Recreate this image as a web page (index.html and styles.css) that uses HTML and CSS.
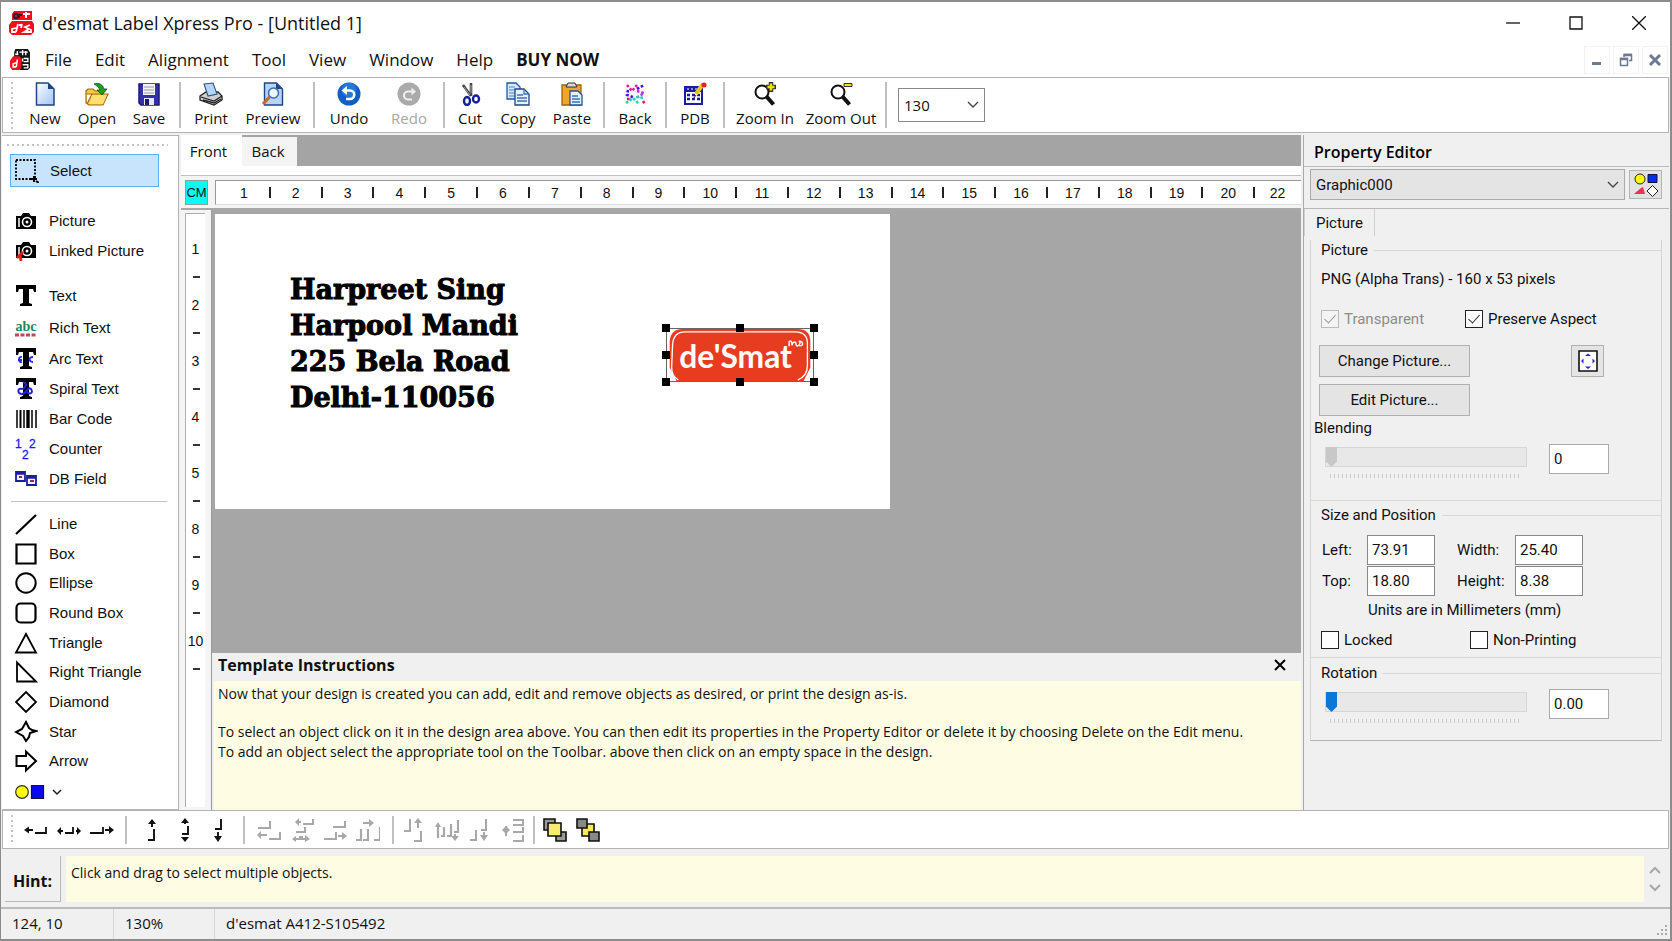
FILE: index.html
```html
<!DOCTYPE html>
<html lang="en">
<head>
<meta charset="utf-8">
<title>d'esmat Label Xpress Pro - [Untitled 1]</title>
<link rel="stylesheet" href="styles.css">
</head>
<body>
<div class="window">

<header class="titlebar">
  <svg class="app-icon" viewBox="0 0 26 26"><path d="M5 1h18v9H3V4z" fill="#e8141c"/><path d="M3 11h20l2 3v8l-3 3H3l-3-3v-7z" fill="#f01018"/><path d="M5 6c0-3 4-3 4 0s-4 3-4 0M10 8V5h3" stroke="#222" stroke-width="2" fill="none"/><path d="M17 2v6M14 4h7" stroke="#fff" stroke-width="2"/><path d="M9 14l-2 8M7 18l-4 1v3h4M12 15h-2M21 15l-5 2 4 2-5 3h7v-3M13 14l-1 4" stroke="#fff" stroke-width="1.800" fill="none"/></svg>
  <h1 class="title">d'esmat Label Xpress Pro - [Untitled 1]</h1>
  <div class="win-controls">
    <button class="win-btn" aria-label="Minimize"><svg viewBox="0 0 14 14"><path d="M0 7h14" stroke="#111" stroke-width="1.3"/></svg></button>
    <button class="win-btn" aria-label="Maximize"><svg viewBox="0 0 14 14"><path d="M1 1h12v12H1z" stroke="#111" stroke-width="1.3" fill="none"/></svg></button>
    <button class="win-btn" aria-label="Close"><svg viewBox="0 0 14 14"><path d="M0 0l14 14M14 0L0 14" stroke="#111" stroke-width="1.3"/></svg></button>
  </div>
</header>

<nav class="menubar">
  <svg class="doc-icon" viewBox="0 0 20 20"><path d="M5 0h12l2 3v15l-2 2H9V8H4V3z" fill="#151515"/><path d="M3 7h6l2 2v9l-2 2H2l-2-3v-6z" fill="#e8141c"/><path d="M7 2v4M12 1v5M9 3h8M15 2v4M5 5h3M13 9h4v3h-4M12 15h5v3h-4M12 9v3" stroke="#fff" stroke-width="1.300" fill="none"/><path d="M7 10l-1 7M6 13l-3 1v3h3" stroke="#fff" stroke-width="1.500" fill="none"/></svg>
  <button class="menu">File</button>
  <button class="menu">Edit</button>
  <button class="menu">Alignment</button>
  <button class="menu">Tool</button>
  <button class="menu">View</button>
  <button class="menu">Window</button>
  <button class="menu">Help</button>
  <button class="menu menu-buy">BUY NOW</button>
  <div class="mdi-controls">
    <button class="mdi-btn" aria-label="Minimize document"><svg viewBox="0 0 14 14"><path d="M2 10.500h9" stroke="#6c7a91" stroke-width="3"/></svg></button>
    <button class="mdi-btn" aria-label="Restore document"><svg viewBox="0 0 14 14"><path d="M5 4V1.500h7.500v6H10M1.500 5.500h7v7h-7z" fill="none" stroke="#6c7a91" stroke-width="1.500"/><path d="M5 2h8M1 6h8" stroke="#6c7a91" stroke-width="2.500"/></svg></button>
    <button class="mdi-btn" aria-label="Close document"><svg viewBox="0 0 14 14"><path d="M2 2l10 10M12 2L2 12" stroke="#6c7a91" stroke-width="3"/></svg></button>
  </div>
</nav>

<div class="toolbar">
  <span class="grip"></span>
  <div class="tool-group">
    <button class="tool w-s"><svg viewBox="0 0 24 24"><defs><linearGradient id="paper" x2="1" y2="1"><stop offset="0" stop-color="#fff"/><stop offset="1" stop-color="#9cc4f4"/></linearGradient></defs><path d="M3.500 1h11.500l6 6v16H3.500z" fill="url(#paper)" stroke="#20457f" stroke-width="1.500"/><path d="M15 1v6h6z" fill="#20457f"/></svg>New</button>
    <button class="tool w-s"><svg viewBox="0 0 24 24"><path d="M1 9l2-2h5l2 2h8v3H1z M1 9v12l3 2h14l5-11H7L2 22" fill="#f8c840" stroke="#a06c10" stroke-width="1.200"/><path d="M7 13h15l-4 9H4z" fill="#ffe070"/><path d="M9 2c5-2 9 1 10 5h3l-5 6-5-5h3c-1-3-3-4-6-6z" fill="#1f9c22" stroke="#0b5a10" stroke-width=".8"/></svg>Open</button>
    <button class="tool w-s"><svg viewBox="0 0 24 24"><path d="M2 2h20v21H4l-2-2z" fill="#3430a8" stroke="#1c187c" stroke-width="1.500"/><path d="M6 2h12v11H6z" fill="#f4f4f4"/><path d="M7 5h10M7 8h10M7 11h10" stroke="#999"/><path d="M7 16h10v7H7z" fill="#e8e8f0"/><path d="M8 17h4v6H8z" fill="#1c187c"/></svg>Save</button>
  </div>
  <div class="tool-group">
    <button class="tool w-s"><svg viewBox="0 0 24 24"><path d="M1 14l6-4h12l4 4v4l-8 5-14-5z" fill="#d0d0d0" stroke="#222" stroke-width="1.300"/><path d="M2 15l13 4 8-5M4 18l11 3 7-4" stroke="#222" stroke-width="1.300" fill="none"/><path d="M5 2l9-1 4 11-9 2z" fill="#b4d4fa" stroke="#31507c" stroke-width="1.100"/></svg>Print</button>
    <button class="tool w-l"><svg viewBox="0 0 24 24"><path d="M3.500 1h12l6 6v16h-18z" fill="#b4d4fa" stroke="#20457f" stroke-width="1.400"/><path d="M15 1v6h6z" fill="#20457f"/><circle cx="12.500" cy="11" r="5" fill="#eef6ff" stroke="#3d6bb0" stroke-width="1.500"/><path d="M8.500 15L2 22" stroke="#c4682c" stroke-width="3"/></svg>Preview</button>
  </div>
  <div class="tool-group">
    <button class="tool w-m"><svg viewBox="0 0 24 24"><circle cx="12" cy="12" r="11.500" fill="#125ec4"/><circle cx="12" cy="8" r="7.500" fill="#3d8ae4" opacity=".55"/><path d="M7.500 8.500H13a4 4 0 010 8.500H9" stroke="#fff" stroke-width="2.600" fill="none"/><path d="M4.500 8.500L10 4v9z" fill="#fff"/></svg>Undo</button>
    <button class="tool w-m" disabled><svg viewBox="0 0 24 24"><circle cx="12" cy="12" r="11.500" fill="#aaa"/><path d="M16 9.500h-5a4 4 0 000 8h4" stroke="#eee" stroke-width="2.200" fill="none"/><path d="M19 9.500L14.500 5.500v8z" fill="#eee"/></svg>Redo</button>
  </div>
  <div class="tool-group">
    <button class="tool w-xs"><svg viewBox="0 0 24 24"><path d="M5 3l8 11M13 1v13" stroke="#444" stroke-width="2.600"/><path d="M6 5l6 8M13 3v8" stroke="#bbb" stroke-width=".8"/><ellipse cx="9" cy="19" rx="3" ry="4" fill="none" stroke="#16209c" stroke-width="2.400"/><ellipse cx="18" cy="17" rx="3" ry="3.500" fill="none" stroke="#16209c" stroke-width="2.400"/></svg>Cut</button>
    <button class="tool w-p"><svg viewBox="0 0 24 24"><path d="M1 1h9l4 4v12H1z" fill="#d8e8fc" stroke="#20559c" stroke-width="1.300"/><path d="M3 5h6M3 8h8M3 11h8M3 14h6" stroke="#4a80c4"/><path d="M9 7h9l5 5v11H9z" fill="#e8f2ff" stroke="#20457f" stroke-width="1.300"/><path d="M18 7v5h5M11 13h6M11 16h10M11 19h10" stroke="#3a72bc" fill="none" stroke-width="1.300"/></svg>Copy</button>
    <button class="tool w-p"><svg viewBox="0 0 24 24"><path d="M2 3h19v20H2z" fill="#f0a428" stroke="#9c6410" stroke-width="1.300"/><path d="M6 5l2-4h7l2 4z" fill="#d8d8d8" stroke="#333"/><path d="M10 9h8l4 4v10H10z" fill="#e4f0ff" stroke="#20559c" stroke-width="1.300"/><path d="M12 14h6M12 17h8M12 20h8" stroke="#3a72bc" stroke-width="1.300"/></svg>Paste</button>
  </div>
  <div class="tool-group">
    <button class="tool w-s"><svg viewBox="0 0 24 24"><g fill="none" stroke-width="2.600" stroke-dasharray="2.600 1.800"><path d="M4 3l5 6 5-6" stroke="#e81890"/><path d="M14 7l7-4M5 8l-1 5 6 2" stroke="#4410e0"/><path d="M14 9l7 2-6 4" stroke="#c030e8"/><path d="M3 21l7-5 6 6M13 15l8 1" stroke="#20d0b8"/><path d="M20 19l2 3M4 17h3" stroke="#e81860"/></g></svg>Back</button>
  </div>
  <div class="tool-group">
    <button class="tool w-xs w-db"><svg viewBox="0 0 24 24"><path d="M2 5h17v17H2z" fill="#fff" stroke="#1c1ca0" stroke-width="2"/><path d="M2 5h17v5H2z" fill="#1c1ca0"/><path d="M4 7h2M8 7h2M12 7h2" stroke="#fff"/><path d="M4 13h13M4 17h13" stroke="#1c1ca0" stroke-width="2.400" stroke-dasharray="3 2"/><path d="M13 12l7-10" stroke="#e8c810" stroke-width="4"/><circle cx="21" cy="3" r="2.500" fill="#e82020"/><path d="M13 13l-2 3" stroke="#222"/></svg>PDB</button>
  </div>
  <div class="tool-group">
    <button class="tool w-zin"><svg viewBox="0 0 24 24"><circle cx="9" cy="10" r="6.500" fill="#fff" stroke="#111" stroke-width="2"/><path d="M13.500 14.500l7 8" stroke="#111" stroke-width="4"/><path d="M18 0v10M13 5h10" stroke="#333" stroke-width="4.500"/><path d="M18 1.500v7M14.500 5h7" stroke="#f4e010" stroke-width="2.400"/></svg>Zoom In</button>
    <button class="tool w-zout"><svg viewBox="0 0 24 24"><circle cx="9" cy="10" r="6.500" fill="#fff" stroke="#111" stroke-width="2"/><path d="M13.500 14.500l7 8" stroke="#111" stroke-width="4"/><path d="M15 1.500h8v3h-8z" fill="#f4e010" stroke="#333"/></svg>Zoom Out</button>
  </div>
  <div class="combo combo-zoom">
    <select aria-label="Zoom level"><option>130</option></select>
    <svg viewBox="0 0 12 8"><path d="M1 1l5 5 5-5" fill="none" stroke="#444" stroke-width="1.400"/></svg>
  </div>
</div>

<main class="work">
  <aside class="palette">
    <span class="grip-h"></span>
    <button class="pal pal-select"><svg viewBox="0 0 24 24"><path d="M1 1h19v19H1z" fill="none" stroke="#000" stroke-width="1.800" stroke-dasharray="2 1.500"/><path d="M16 20h6M19 17v6M21 22l3 2" stroke="#000" stroke-width="2"/></svg>Select</button>
    <div class="pal-list">
      <button class="pal"><svg viewBox="0 0 24 24"><path d="M2 7h5l2-3h6l2 3h5v13H2z" fill="#000"/><circle cx="13" cy="13" r="4.500" fill="none" stroke="#fff" stroke-width="1.600"/><circle cx="13" cy="13" r="1.500" fill="#fff"/><path d="M5 9v9" stroke="#fff" stroke-width="1.500"/></svg>Picture</button>
      <button class="pal"><svg viewBox="0 0 24 24"><path d="M2 6h5l2-3h6l2 3h5v13H2z" fill="#000"/><circle cx="13" cy="12" r="4.500" fill="none" stroke="#fff" stroke-width="1.600"/><circle cx="13" cy="12" r="1.500" fill="#fff"/><path d="M5 8v9" stroke="#fff" stroke-width="1.500"/><path d="M9 13l-6 6M6 15l1 7" stroke="#f01818" stroke-width="2.800"/></svg>Linked Picture</button>
    </div>
    <div class="pal-list pal-text">
      <button class="pal pal-tall"><svg viewBox="0 0 24 24"><path d="M2 1h20v7h-2l-1-3h-4v14l3 1v2H6v-2l3-1V5H5L4 8H2z" fill="#000"/></svg>Text</button>
      <button class="pal pal-tall"><svg viewBox="0 0 24 24"><text x="12" y="15" text-anchor="middle" class="icon-abc">abc</text><path d="M1 19h22" stroke="#b84c50" stroke-width="3" stroke-dasharray="4 1.500"/></svg>Rich Text</button>
      <button class="pal"><svg viewBox="0 0 24 24"><path d="M2 1h20v7h-2l-1-3h-4v14l3 1v2H6v-2l3-1V5H5L4 8H2z" fill="#000"/><path d="M8 10c-4-1-4 6 0 5M4 13h4M19 10c-5 0-4 5 0 5" fill="none" stroke="#2828e0" stroke-width="1.800"/></svg>Arc Text</button>
      <button class="pal"><svg viewBox="0 0 24 24"><path d="M2 1h20v7h-2l-1-3h-4v14l3 1v2H6v-2l3-1V5H5L4 8H2z" fill="#000"/><path d="M9 5c6 2 1 6 0 7M9 12c-6-2-6 5-1 5 5 0 5-8 9-5 3 4-2 6-4 3" fill="none" stroke="#2020e0" stroke-width="2"/></svg>Spiral Text</button>
      <button class="pal"><svg viewBox="0 0 24 24"><path d="M3 3v18M10 3v18M18 3v18M22 3v18" stroke="#000" stroke-width="1.500"/><path d="M6.500 3v18" stroke="#000" stroke-width="2"/><path d="M14 3v18" stroke="#000" stroke-width="3.400"/></svg>Bar Code</button>
      <button class="pal"><svg viewBox="0 0 24 24" class="icon-num"><text x="1" y="11">1</text><text x="8" y="22">2</text><text x="15" y="11">2</text></svg>Counter</button>
      <button class="pal"><svg viewBox="0 0 24 24"><path d="M2 5h9v9H2zM13 9h9v9h-9z" fill="#f4f0ff" stroke="#1c1ca0" stroke-width="1.800"/><path d="M2 6.500h9M13 10.500h9" stroke="#1c1ca0" stroke-width="2.500"/><path d="M5 10h3M16 14h4" stroke="#803050" stroke-width="2"/></svg>DB Field</button>
    </div>
    <hr class="pal-rule">
    <div class="pal-list pal-shapes">
      <button class="pal"><svg viewBox="0 0 24 24"><path d="M2 22L22 3" stroke="#000" stroke-width="2.200"/></svg>Line</button>
      <button class="pal"><svg viewBox="0 0 24 24"><path d="M2.500 2.500h19v19h-19z" fill="none" stroke="#000" stroke-width="2.200"/></svg>Box</button>
      <button class="pal"><svg viewBox="0 0 24 24"><circle cx="12" cy="12" r="9.700" fill="none" stroke="#000" stroke-width="2"/></svg>Ellipse</button>
      <button class="pal"><svg viewBox="0 0 24 24"><rect x="2.500" y="2.500" width="19" height="19" rx="4" fill="none" stroke="#000" stroke-width="2.200"/></svg>Round Box</button>
      <button class="pal"><svg viewBox="0 0 24 24"><path d="M12 3l10 18.500H2z" fill="none" stroke="#000" stroke-width="1.800"/></svg>Triangle</button>
      <button class="pal"><svg viewBox="0 0 24 24"><path d="M3 2.500L22 21.500H3z" fill="none" stroke="#000" stroke-width="1.800"/></svg>Right Triangle</button>
      <button class="pal"><svg viewBox="0 0 24 24"><path d="M12 2l10 10-10 10L2 12z" fill="none" stroke="#000" stroke-width="1.800"/></svg>Diamond</button>
      <button class="pal"><svg viewBox="0 0 24 24"><path d="M12 2l3 6 3 2 4 1-6 2-1 4-3 4-3-5-7-4 6-3z" fill="none" stroke="#000" stroke-width="2"/></svg>Star</button>
      <button class="pal"><svg viewBox="0 0 24 24"><path d="M2.500 7H12V2.500L22 12l-10 9.500V17H2.500z" fill="none" stroke="#000" stroke-width="2"/></svg>Arrow</button>
    </div>
    <button class="pal-more" aria-label="More shapes"><svg viewBox="0 0 48 16"><circle cx="7" cy="8" r="6.300" fill="#ff0" stroke="#333" stroke-width="1.200"/><path d="M16.500 1.500h12v13h-12z" fill="#0a0af0" stroke="#113" stroke-width="1.200"/><path d="M38 6l4 4 4-4" fill="none" stroke="#222" stroke-width="1.500"/></svg></button>
  </aside>

  <section class="editor">
    <div class="tabs"><button class="tab tab-on">Front</button><button class="tab">Back</button></div>
    <div class="tab-base"></div>
    <div class="ruler-top">
      <button class="unit">CM</button>
      <ol class="hruler"><li>1</li><li>2</li><li>3</li><li>4</li><li>5</li><li>6</li><li>7</li><li>8</li><li>9</li><li>10</li><li>11</li><li>12</li><li>13</li><li>14</li><li>15</li><li>16</li><li>17</li><li>18</li><li>19</li><li>20</li><li>22</li></ol>
    </div>
    <div class="editor-body">
      <div class="vrail"><ol class="vruler"><li>1</li><li>2</li><li>3</li><li>4</li><li>5</li><li>8</li><li>9</li><li>10</li></ol></div>
      <div class="design">
        <div class="canvas">
          <div class="label-page">
            <p class="address">Harpreet Sing<br>Harpool Mandi<br>225 Bela Road<br>Delhi-110056</p>
            <div class="graphic">
              <svg viewBox="0 0 148 54"><path d="M14 0H134Q147 0 147 13V40L140 54H8L1 40V13Q2 0 14 0z" fill="#e83c20"/><path d="M10 53Q3 49 3 40L4 16Q5 3 17 3H131Q144 3 144 15V38Q144 49 134 53" fill="none" stroke="#fff" stroke-width="1.400"/><text x="11" y="41" class="logo-word">de'Smat</text><path d="M125 18v-5q3-2 3 4 1-5 4-3M132 14q0 5 3 3 3-4 0-4 4-1 4 3-1 2-4 1" fill="none" stroke="#fff" stroke-width="1.500"/></svg>
              <i class="h nw"></i><i class="h n"></i><i class="h ne"></i><i class="h w"></i><i class="h e"></i><i class="h sw"></i><i class="h s"></i><i class="h se"></i>
            </div>
          </div>
        </div>
        <div class="notes-head"><h2>Template Instructions</h2><button aria-label="Close instructions"><svg viewBox="0 0 12 12"><path d="M1 1l10 10M11 1L1 11" stroke="#000" stroke-width="2"/></svg></button></div>
        <div class="notes">
          <p>Now that your design is created you can add, edit and remove objects as desired, or print the design as-is.</p>
          <p>To select an object click on it in the design area above. You can then edit its properties in the Property Editor or delete it by choosing Delete on the Edit menu.<br>To add an object select the appropriate tool on the Toolbar. above then click on an empty space in the design.</p>
        </div>
      </div>
    </div>
  </section>

  <aside class="props">
    <h2 class="props-title">Property Editor</h2>
    <div class="props-pick">
      <div class="combo combo-object">
        <select aria-label="Object"><option>Graphic000</option></select>
        <svg viewBox="0 0 12 8"><path d="M1 1l5 5 5-5" fill="none" stroke="#444" stroke-width="1.400"/></svg>
      </div>
      <button class="pick-btn" aria-label="Shapes"><svg viewBox="0 0 24 24"><circle cx="6" cy="6" r="5" fill="#ff0" stroke="#222"/><path d="M14 1.500h9v8h-9z" fill="#0a2af0" stroke="#113"/><path d="M0 21l7-6 2-1 2 7z" fill="#f03050"/><path d="M18.500 12.500L24 18l-5.500 5.500L13 18z" fill="#fff" stroke="#222"/></svg></button>
    </div>
    <div class="props-tabs"><button class="props-tab">Picture</button></div>
    <div class="props-body">
      <section class="group group-picture">
        <h3 class="legend"><span>Picture</span></h3>
        <p class="info">PNG (Alpha Trans) - 160 x 53 pixels</p>
        <div class="checks"><label class="check off"><input type="checkbox" checked disabled>Transparent</label><label class="check"><input type="checkbox" checked>Preserve Aspect</label></div>
        <div class="pic-actions">
          <div class="pic-buttons"><button class="btn">Change Picture...</button><button class="btn">Edit Picture...</button></div>
          <button class="fit-btn" aria-label="Fit to page"><svg viewBox="0 0 20 22"><path d="M1 1h18v20H1z" fill="#fff" stroke="#111" stroke-width="1.600"/><path d="M10 3.500l3 2.500H7zM10 19l-3-2.500h6zM3 11l2.500-2.500v5zM17 11l-2.500-2.500v5z" fill="#2020e8"/></svg></button>
        </div>
        <label class="blend-label" for="blend">Blending</label>
        <div class="slide-row"><div class="slide"><input id="blend" type="range" value="0" disabled><span class="ticks"></span></div><input class="num" type="text" value="0" aria-label="Blending value"></div>
      </section>
      <section class="group group-size">
        <h3 class="legend"><span>Size and Position</span></h3>
        <div class="fields">
          <label for="left">Left:</label><input id="left" class="num" type="text" value="73.91">
          <label for="width">Width:</label><input id="width" class="num" type="text" value="25.40">
          <label for="top">Top:</label><input id="top" class="num" type="text" value="18.80">
          <label for="height">Height:</label><input id="height" class="num" type="text" value="8.38">
        </div>
        <p class="units">Units are in Millimeters (mm)</p>
        <div class="checks"><label class="check"><input type="checkbox">Locked</label><label class="check"><input type="checkbox">Non-Printing</label></div>
      </section>
      <section class="group group-rotate">
        <h3 class="legend"><span>Rotation</span></h3>
        <div class="slide-row"><div class="slide"><input type="range" value="0" aria-label="Rotation"><span class="ticks"></span></div><input class="num" type="text" value="0.00" aria-label="Rotation value"></div>
      </section>
    </div>
  </aside>
</main>

<div class="alignbar">
  <span class="grip"></span>
  <div class="align-group align-h">
    <button aria-label="Nudge left"><svg viewBox="0 0 24 24"><path d="M3 12h6M11 15h11V9" stroke="currentColor" stroke-width="1.800" fill="none"/><path d="M0 12l5-3.500v7z" fill="currentColor"/></svg></button>
    <button aria-label="Center across"><svg viewBox="0 0 24 24"><path d="M2 13h4M19 13h3M8 15h8V9" stroke="currentColor" stroke-width="1.800" fill="none"/><path d="M0 13l4-4v8zM24 13l-4-4v8z" fill="currentColor"/></svg></button>
    <button aria-label="Nudge right"><svg viewBox="0 0 24 24"><path d="M0 15h13V9M15 12h6" stroke="currentColor" stroke-width="1.800" fill="none"/><path d="M24 12l-5-4v8z" fill="currentColor"/></svg></button>
  </div>
  <div class="align-group align-v">
    <button aria-label="Nudge up"><svg viewBox="0 0 24 24"><path d="M12 3v6M14 11v11H8" stroke="currentColor" stroke-width="1.900" fill="none"/><path d="M12 1l4 5H8z" fill="currentColor"/></svg></button>
    <button aria-label="Center down"><svg viewBox="0 0 24 24"><path d="M12 3v3M12 20v2M15 8v8H9" stroke="currentColor" stroke-width="1.900" fill="none"/><path d="M12 0l4 5H8zM12 24l-4-5h8z" fill="currentColor"/></svg></button>
    <button aria-label="Nudge down"><svg viewBox="0 0 24 24"><path d="M15 1v10H9M12 14v8" stroke="currentColor" stroke-width="1.900" fill="none"/><path d="M12 24l-4-6h8z" fill="currentColor"/></svg></button>
  </div>
  <div class="align-group align-edges">
    <button disabled aria-label="Align left"><svg viewBox="0 0 24 24"><path d="M1 10h12V3M3 17h7M12 21h11v-7" stroke="currentColor" stroke-width="2" fill="none"/><path d="M0 17l4-4v8z" fill="currentColor"/></svg></button>
    <button disabled aria-label="Align centers"><svg viewBox="0 0 24 24"><path d="M7 4h4M13 6h10V1M6 14h9V9M4 21h13" stroke="currentColor" stroke-width="2" fill="none"/><path d="M5 4l4-4v8zM2 21l4-3v6zM20 21l-5-4v7zM9 18h4v4H9z" fill="currentColor"/></svg></button>
    <button disabled aria-label="Align right"><svg viewBox="0 0 24 24"><path d="M10 9h12V3M1 21h12v-7M15 18h6" stroke="currentColor" stroke-width="2" fill="none"/><path d="M24 18l-5-4v8z" fill="currentColor"/></svg></button>
    <button disabled aria-label="Space across"><svg viewBox="0 0 24 24"><path d="M7 5h9M0 22h5V11M7 22h5V11M18 22h6V9" stroke="currentColor" stroke-width="2.200" fill="none"/><path d="M18 5l-5-4v8z" fill="currentColor"/></svg></button>
  </div>
  <div class="align-group">
    <button disabled aria-label="Align top"><svg viewBox="0 0 24 24"><path d="M8 1v12H2M16 3v7M19 13v10h-7" stroke="currentColor" stroke-width="2" fill="none"/><path d="M16 0l4 5h-8z" fill="currentColor"/></svg></button>
    <button disabled aria-label="Align middles"><svg viewBox="0 0 24 24"><path d="M3 8v12M9 9v9H6M16 6v12h-4M23 2v12h-4M20 16v5" stroke="currentColor" stroke-width="2.200" fill="none"/><path d="M3 4l3 5H0zM20 23l-4-5h8z" fill="currentColor"/></svg></button>
    <button disabled aria-label="Align bottom"><svg viewBox="0 0 24 24"><path d="M18 1v11h-5M16 14v8M8 12v10H2" stroke="currentColor" stroke-width="2" fill="none"/><path d="M16 23l-4-6h8z" fill="currentColor"/></svg></button>
    <button disabled aria-label="Space down"><svg viewBox="0 0 24 24"><path d="M12 2h10v5H12M12 14h10V9M12 23h10v-6M5 8v10" stroke="currentColor" stroke-width="2" fill="none"/><path d="M1 12l4-4 4 4-4 4z" fill="currentColor"/></svg></button>
  </div>
  <div class="align-group">
    <button aria-label="Bring to front"><svg viewBox="0 0 24 24"><path d="M1 1h11v11H1zM13 14h10v9H13z" fill="#999" stroke="#111" stroke-width="1.600"/><path d="M5 5h13v13H5z" fill="#f8ec70" stroke="#111" stroke-width="1.600"/></svg></button>
    <button aria-label="Send to back"><svg viewBox="0 0 24 24"><path d="M6 6h12v12H6z" fill="#f8ec50" stroke="#111" stroke-width="1.600"/><path d="M1 1h10v9H1zM13 14h10v9H13z" fill="#888" stroke="#111" stroke-width="1.600"/></svg></button>
  </div>
</div>

<div class="hintbar">
  <strong class="hint-label">Hint:</strong>
  <p class="hint-text">Click and drag to select multiple objects.</p>
  <div class="hint-scroll">
    <button aria-label="Scroll up"><svg viewBox="0 0 12 8"><path d="M1 7l5-5 5 5" fill="none" stroke="#a8a8a8" stroke-width="2"/></svg></button>
    <button aria-label="Scroll down"><svg viewBox="0 0 12 8"><path d="M1 1l5 5 5-5" fill="none" stroke="#a8a8a8" stroke-width="2"/></svg></button>
  </div>
</div>

<footer class="statusbar">
  <span class="st st-pos">124, 10</span><span class="st st-zoom">130%</span><span class="st st-doc">d'esmat A412-S105492</span>
  <svg viewBox="0 0 12 12"><path d="M9 1h2M9 5h2M5 5h2M9 9h2M5 9h2M1 9h2" stroke="#aaa" stroke-width="2"/></svg>
</footer>
</div>
</body>
</html>
```
FILE: styles.css
```css
* { box-sizing: border-box; }
body {
  margin: 0;
  color: #111;
  font: 16px/20px "Open Sans", "Noto Sans", sans-serif;
}
h1, h2, h3, p, ol { margin: 0; padding: 0; font-weight: 400; }
ol { list-style: none; }
button, input, select { margin: 0; font: inherit; color: inherit; border-radius: 0; }
button { padding: 0; border: 0; background: none; }
svg { display: block; flex: none; }

.window {
  min-height: 100vh;
  display: flex;
  flex-direction: column;
  background: #f0f0f0;
  border: 2px solid #8c8c8c;
  border-width: 2px 2px 2px 1px;
}

/* title and menu */
.titlebar { display: flex; align-items: center; height: 42px; background: #fff; padding-left: 8px; }
.app-icon { width: 26px; height: 26px; }
.title { flex: 1; margin-left: 7px; font-size: 18px; line-height: 24px; }
.win-controls { display: flex; }
.win-btn { width: 63px; height: 42px; display: grid; place-items: center; }
.win-btn svg { width: 14px; height: 14px; }
.menubar { display: flex; align-items: center; gap: 1px; height: 33px; background: #fff; padding: 0 0 2px 9px; }
.doc-icon { width: 21px; height: 21px; margin-right: 2px; }
.menu { padding: 0 11px; height: 28px; font-size: 17px; }
.menu-buy { font-weight: 700; }
.mdi-controls { display: flex; gap: 3px; margin-left: auto; padding-right: 2px; }
.mdi-btn { width: 26px; height: 28px; border: 1px solid #f2f2f2; display: grid; place-items: center; }
.mdi-btn svg { width: 14px; height: 14px; }

/* main toolbar */
.toolbar {
  display: flex;
  align-items: center;
  height: 56px;
  margin: 0 1px;
  background: #fff;
  border: 1px solid #b4b4b4;
}
.grip { width: 2px; margin: 4px 2px 3px 8px; align-self: stretch; background: repeating-linear-gradient(#c4c4c4 0 2px, transparent 2px 5px); }
.tool-group { display: flex; padding: 0 4px; border-right: 2px solid #c0c0c0; height: 46px; }
.tool { display: flex; flex-direction: column; align-items: center; justify-content: space-between; font-size: 15px; line-height: 20px; white-space: nowrap; }
.tool svg { width: 24px; height: 24px; }
.tool:disabled { color: #a8a8a8; }
.w-xs { width: 42px; }
.w-db { width: 48px; }
.w-s { width: 52px; }
.w-p { width: 54px; }
.w-m { width: 60px; }
.w-l { width: 72px; }
.w-zin { width: 72px; }
.w-zout { width: 80px; }
.combo { position: relative; display: flex; }
.combo select { appearance: none; width: 100%; border: 1px solid #888; background: #fff; padding: 0 5px; }
.combo svg { position: absolute; right: 6px; top: 50%; width: 12px; height: 8px; margin-top: -4px; pointer-events: none; }
.combo-zoom { width: 87px; height: 34px; margin-left: 11px; font-size: 15px; }

/* work area */
.work { flex: 1; display: flex; padding: 2px 1px 0; min-height: 0; }
.palette {
  width: 177px;
  display: flex;
  flex-direction: column;
  padding: 8px 0 0 5px;
  background: #fff;
  border: 1px solid #b4b4b4;
  border-left: 0;
  font-family: "Liberation Sans", Arial, sans-serif;
  font-size: 15px;
}
.grip-h { height: 2px; margin-right: 10px; background: repeating-linear-gradient(90deg, #c4c4c4 0 2px, transparent 2px 5px); }
.pal { display: flex; align-items: center; gap: 11px; height: 30px; padding-left: 6px; width: 100%; text-align: left; white-space: nowrap; }
.pal svg { width: 24px; height: 24px; }
.pal-select { width: 149px; height: 33px; margin: 8px 0 19px 3px; padding-left: 4px; background: #c8e4fc; border: 1px solid #5eaef0; }
.pal-list { padding-left: 1px; }
.pal-text { margin-top: 14px; }
.pal-tall { height: 32px; }
.pal-rule { width: 156px; margin: 7px 0 7px 4px; border: 0; border-top: 1px solid #c4c4c4; }
.pal-shapes { flex: 1; display: flex; flex-direction: column; }
.pal-shapes .pal { flex: 1; height: auto; }
.pal-more { margin: 8px 0 9px 8px; width: 48px; }
.pal-more svg { width: 48px; height: 16px; }
.icon-abc { font: 700 14px "Liberation Serif", serif; fill: #1c8464; }
.icon-num { font: 12px "Liberation Sans", sans-serif; fill: #2020e0; stroke: #2020e0; stroke-width: 0.3; }

/* editor */
.editor { flex: 1; min-width: 0; display: flex; flex-direction: column; margin-left: 2px; }
.tabs { display: flex; height: 31px; background: #a4a4a4; }
.tab { width: 55px; font-size: 15px; background: #f4f4f4; margin-top: 2px; padding: 0 3px 2px 0; }
.tab-on { width: 61px; background: #fff; margin-top: 0; padding: 0 6px 0 0; }
.tab-base { height: 10px; background: #fff; border-bottom: 1px solid #c0c0c0; }
.ruler-top { display: flex; height: 34px; padding: 4px 0 3px 4px; background: #f4f4f4; border-bottom: 2px solid #a8a8a8; }
.unit { width: 23px; background: #0ff; border: 1px solid #999; margin-right: 7px; font: 13px/16px "Liberation Sans", sans-serif; }
.hruler { flex: 1; display: flex; align-items: center; padding-left: 2px; background: #fff; border: 1px solid #999; border-right: 0; border-bottom-color: #ddd; font: 14px/16px "Liberation Sans", sans-serif; }
.hruler li { flex: 1 1 0; text-align: center; position: relative; }
.hruler li:last-child { flex-grow: 0.9; }
.hruler li:not(:last-child)::after { content: ""; position: absolute; right: -1px; top: 2px; width: 2px; height: 11px; background: #222; }
.editor-body { flex: 1; display: flex; }
.vrail { width: 30px; padding: 3px 6px 3px 4px; background: #f4f4f4; }
.vruler { height: 100%; padding-top: 7px; background: #fff; border: 1px solid #b0b0b0; border-width: 1px 0 0 1px; font: 14px/16px "Liberation Sans", sans-serif; }
.vruler li { height: 56px; display: grid; place-items: center; position: relative; }
.vruler li::after { content: ""; position: absolute; left: 7px; bottom: -1px; width: 7px; height: 2px; background: #333; }
.design { flex: 1; min-width: 0; display: flex; flex-direction: column; border-left: 1px solid #999; }
.canvas { flex: 1; background: #a6a6a6; padding: 4px 3px; }
.label-page { position: relative; width: 675px; height: 295px; background: #fff; }
.address { position: absolute; left: 75px; top: 58px; font: 700 27px/36px "DejaVu Serif", serif; color: #000; -webkit-text-stroke: 1px #000; white-space: nowrap; }
.graphic { position: absolute; left: 451px; top: 114px; width: 148px; height: 54px; border: 1px solid #666; }
.graphic svg { width: 100%; height: 100%; }
.logo-word { font: 700 33px Lato, sans-serif; fill: #fff; }
.h { position: absolute; width: 8px; height: 8px; background: #000; }
.nw, .n, .ne { top: -5px; }
.w, .e { top: 22px; }
.sw, .s, .se { bottom: -5px; }
.nw, .w, .sw { left: -5px; }
.n, .s { left: 69px; }
.ne, .e, .se { right: -5px; }
.notes-head { display: flex; align-items: center; justify-content: space-between; height: 28px; padding: 0 15px 4px 6px; background: #f0f0f0; }
.notes-head h2 { font-size: 16px; font-weight: 700; }
.notes-head svg { width: 12px; height: 12px; }
.notes { height: 129px; margin-left: 2px; padding: 3px 4px; background: #fefde4; font-size: 14px; line-height: 20px; }
.notes p + p { margin-top: 18px; }

/* property editor */
.props { width: 366px; display: flex; flex-direction: column; margin-left: 2px; border-left: 1px solid #aaa; font-family: Roboto, sans-serif; font-size: 15px; }
.props-title { height: 32px; padding: 7px 10px; font: 600 16px/20px "Open Sans", sans-serif; border-bottom: 1px solid #bbb; color: #000; }
.props-pick { display: flex; gap: 4px; padding: 2px 7px 8px 6px; border-bottom: 1px solid #b8b8b8; }
.combo-object { flex: 1; height: 31px; }
.combo-object select { background: #e4e4e4; border-color: #aaa; }
.pick-btn { width: 33px; height: 29px; margin-top: 1px; background: #e2e2e2; border: 1px solid #b4b4b4; display: grid; place-items: center; }
.pick-btn svg { width: 24px; height: 24px; }
.props-tabs { display: flex; }
.props-tab { width: 71px; height: 27px; border: 1px solid #d0d0d0; border-width: 0 1px 0 1px; }
.props-body { margin: 4px 7px 0 6px; border: 1px solid #d4d4d4; border-top: 0; border-bottom-color: #b4b4b4; }
.legend { display: flex; align-items: center; font-size: 15px; line-height: 20px; }
.legend span { padding: 0 6px 0 10px; }
.legend::after { content: ""; flex: 1; height: 1px; background: #d8d8d8; }
.group { border-bottom: 1px solid #d8d8d8; }
.group-picture { height: 261px; }
.group-size { height: 157px; padding-top: 4px; }
.group-rotate { border: 0; height: 82px; padding-top: 5px; }
.info { margin: 9px 10px 0; }
.checks { display: grid; grid-template-columns: 144px 1fr; padding: 0 10px; margin-top: 20px; }
.check { display: flex; align-items: center; gap: 5px; white-space: nowrap; }
.check.off { color: #8c8c8c; }
.check input { appearance: none; position: relative; width: 18px; height: 18px; border: 1px solid #222; background: #fff; }
.check.off input { border-color: #bbb; background: #f4f4f4; }
.check input:checked::after { content: ""; position: absolute; left: 5px; top: 1px; width: 5px; height: 10px; border: solid #333; border-width: 0 1px 1px 0; transform: rotate(42deg); }
.check.off input:checked::after { border-color: #999; }
.pic-actions { display: flex; justify-content: space-between; margin: 16px 57px 0 8px; }
.pic-buttons { display: grid; gap: 7px; }
.btn { width: 151px; height: 32px; background: #e4e4e4; border: 1px solid #b0b0b0; }
.fit-btn { width: 33px; height: 32px; background: #e4e4e4; border: 1px solid #b0b0b0; display: grid; place-items: center; }
.fit-btn svg { width: 20px; height: 22px; }
.blend-label { display: block; margin: 2px 3px 0; }
.slide-row { display: flex; justify-content: space-between; margin: 6px 52px 0 14px; }
.slide { width: 202px; padding-top: 3px; }
.slide input { appearance: none; display: block; width: 100%; height: 20px; background: #e8e8e8; border: 1px solid #d6d6d6; }
.slide input::-webkit-slider-thumb { appearance: none; width: 11px; height: 20px; background: #0b78d8; clip-path: polygon(0 0, 100% 0, 100% 72%, 50% 100%, 0 72%); }
.slide input:disabled::-webkit-slider-thumb { background: #c8c8c8; }
.ticks { display: block; height: 4px; margin: 7px 5px 0; background: repeating-linear-gradient(90deg, #ccc 0 1px, transparent 1px 4px); }
.num { width: 60px; height: 30px; padding: 0 4px; background: #fff; border: 1px solid #aaa; }
.fields { display: grid; grid-template-columns: 45px 90px 58px 68px; row-gap: 1px; align-items: center; padding-left: 11px; margin-top: 10px; }
.fields .num { width: 68px; border-color: #888; }
.units { margin: 4px 0 0 57px; }
.group-size .checks { margin-top: 10px; grid-template-columns: 149px 1fr; }

/* bottom bars */
.alignbar { display: flex; align-items: center; height: 39px; margin: 0 1px; background: #fff; border: 1px solid #b4b4b4; }
.align-group { display: flex; gap: 9px; padding: 0 8px; border-right: 2px solid #c0c0c0; height: 28px; align-items: center; }
.align-group svg { width: 24px; height: 24px; }
.align-group button:disabled { color: #a8a8a8; }
.align-h { padding: 0 11px 0 9px; }
.align-v { padding: 0 13px; }
.align-edges { padding: 0 12px; }
.align-group:last-child { border: 0; }
.hintbar { display: flex; height: 60px; padding: 7px 4px 5px; border-bottom: 2px solid #bbb; }
.hint-label { width: 56px; padding-top: 15px; text-align: center; border: 1px solid #b8b8b8; border-width: 0 1px 1px 0; font-weight: 700; }
.hint-text { flex: 1; margin-left: 5px; padding: 7px 5px; background: #fefde4; font-size: 14px; }
.hint-scroll { width: 22px; display: flex; flex-direction: column; justify-content: space-evenly; align-items: center; }
.hint-scroll svg { width: 12px; height: 8px; }
.statusbar { display: flex; align-items: center; height: 30px; }
.st { height: 100%; padding: 4px 11px; border-right: 1px solid #d8d8d8; font-size: 15px; }
.st-pos { width: 113px; }
.st-zoom { width: 101px; }
.st-doc { flex: 1; border: 0; }
.statusbar svg { width: 12px; height: 12px; align-self: flex-end; margin: 0 2px 2px 0; }
```
